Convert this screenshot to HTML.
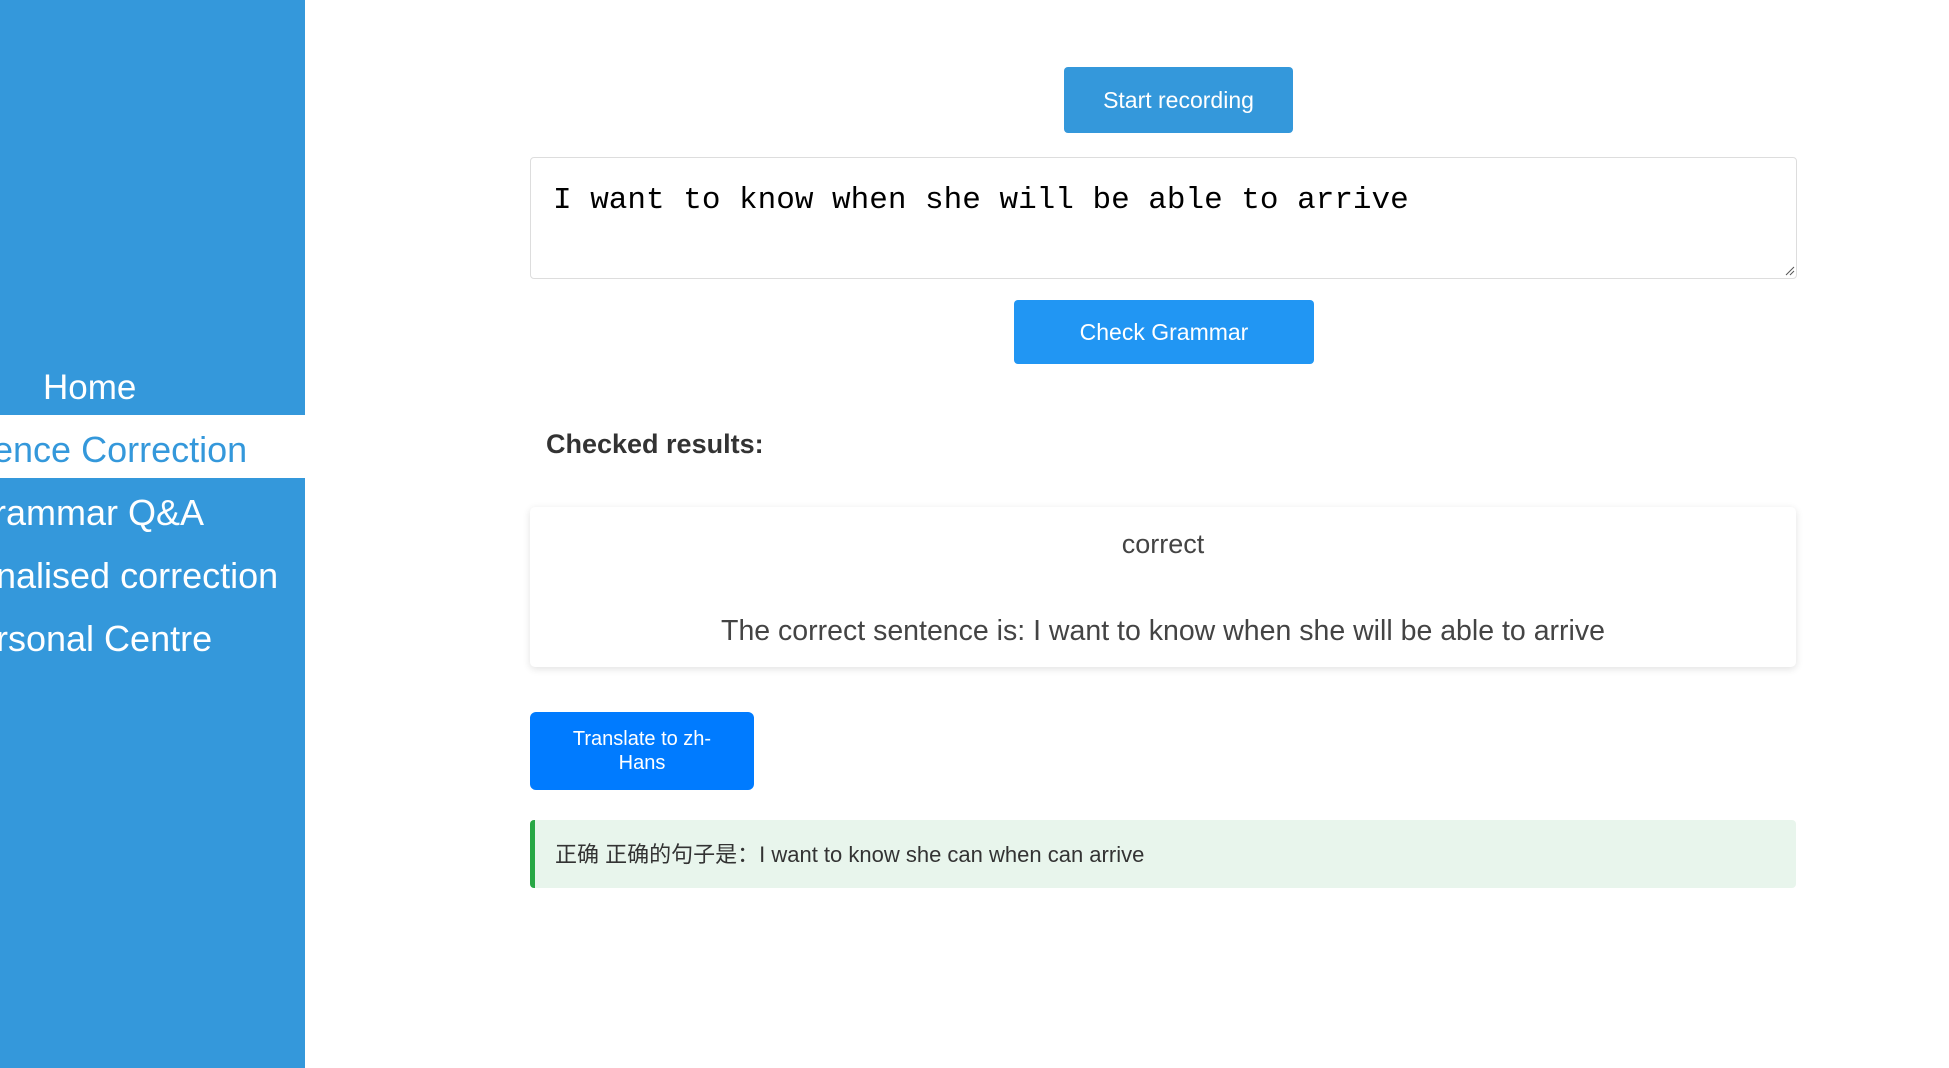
<!DOCTYPE html>
<html><head><meta charset="utf-8"><style>
*{margin:0;padding:0;box-sizing:border-box}
body{width:1949px;height:1068px;position:relative;background:#fff;font-family:"Liberation Sans","Noto Sans CJK SC",sans-serif;overflow:hidden}
.sb{position:absolute;left:0;top:0;width:305px;height:1068px;background:#3498db}
.act{position:absolute;left:0;top:415px;width:305px;height:63px;background:#fff}
.mi{position:absolute;font-size:36px;color:#fff;white-space:nowrap;line-height:40px}
.btn{position:absolute;color:#fff;display:flex;align-items:center;justify-content:center;text-align:center;border-radius:4px}
</style></head><body>
<div class="sb"></div>
<div class="act"></div>
<div class="mi" style="left:43px;top:368px;font-size:35px">Home</div>
<div class="mi" style="left:-7px;top:430px;color:#3498db">ence Correction</div>
<div class="mi" style="left:-6px;top:493px">rammar Q&amp;A</div>
<div class="mi" style="left:-4px;top:556px">nalised correction</div>
<div class="mi" style="left:-4px;top:619px">rsonal Centre</div>

<div class="btn" style="left:1064px;top:67px;width:229px;height:66px;background:#3498db;font-size:23px">Start recording</div>
<div style="position:absolute;left:530px;top:157px;width:1267px;height:122px;border:1px solid #ddd;border-radius:4px"></div>
<div style="position:absolute;left:553px;top:183px;font-family:'Liberation Mono',monospace;font-size:31px;color:#000;white-space:nowrap">I want to know when she will be able to arrive</div>
<svg style="position:absolute;left:1785px;top:266px" width="10" height="10"><path d="M9 1L1 9M9 5L5 9" stroke="#555" stroke-width="1"/></svg>
<div class="btn" style="left:1014px;top:300px;width:300px;height:64px;background:#2196f3;font-size:23px">Check Grammar</div>

<div style="position:absolute;left:546px;top:429px;font-size:27px;font-weight:bold;color:#333">Checked results:</div>

<div style="position:absolute;left:530px;top:507px;width:1266px;height:160px;background:#fff;border-radius:5px;box-shadow:0 2px 8px rgba(0,0,0,0.12);text-align:center;color:#444;font-size:28.5px">
<div style="position:absolute;left:0;right:0;top:22px;font-size:27px">correct</div>
<div style="position:absolute;left:0;right:0;top:108px">The correct sentence is: I want to know when she will be able to arrive</div>
</div>

<div class="btn" style="left:530px;top:712px;width:224px;height:78px;background:#007bff;font-size:20px;border-radius:6px;line-height:24px;padding:0 30px">Translate to zh-Hans</div>

<div style="position:absolute;left:530px;top:820px;width:1266px;height:68px;background:#e8f5ec;border-left:5px solid #28a745;border-radius:4px;font-size:22px;color:#333;padding-left:20px;line-height:70px">正确 正确的句子是：I want to know she can when can arrive</div>
</body></html>
